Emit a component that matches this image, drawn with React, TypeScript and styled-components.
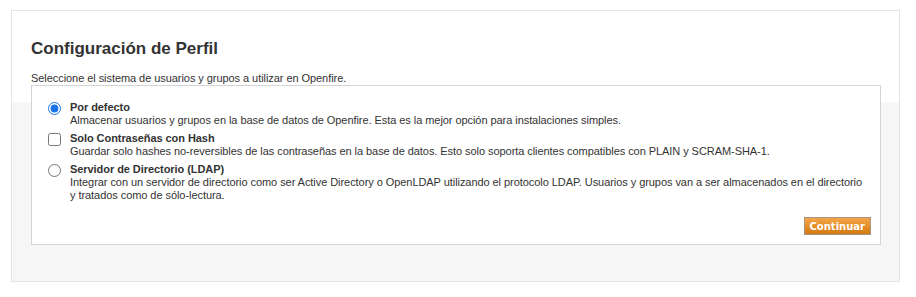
import { FC } from 'react';
import styled, { createGlobalStyle } from 'styled-components';

const GlobalStyle = createGlobalStyle`
  body {
    margin: 0;
    background-color: #ffffff;
    font-family: "Liberation Sans", Arial, sans-serif;
    color: #333333;
  }
`;

const Page = styled.div`
  padding: 10px 16px 16px 11px;
`;

const Panel = styled.div`
  border: 1px solid #e4e4e4;
  background: linear-gradient(to bottom, #ffffff 0px, #ffffff 91px, #f6f6f6 92px, #f6f6f6 100%);
  padding: 27px 18px 35px 19px;
  height: 272px;
  box-sizing: border-box;
`;

const Title = styled.h1`
  margin: 0 0 13px 0;
  font-size: 17px;
  line-height: 21px;
  font-weight: bold;
  color: #333333;
`;

const Intro = styled.p`
  margin: 0;
  font-size: 11px;
  line-height: 13px;
  letter-spacing: -0.06px;
`;

const OptionsBox = styled.div`
  border: 1px solid #d4d4d4;
  background-color: #ffffff;
  padding: 15px 9px 9px 16px;
  display: flex;
  flex-direction: column;
`;

const OptionList = styled.div`
  display: flex;
  flex-direction: column;
  gap: 5px;
  padding-right: 5px;
`;

const OptionRow = styled.label`
  display: grid;
  grid-template-columns: 22px 1fr;
  font-size: 11px;
  line-height: 13px;
  letter-spacing: -0.06px;
`;

const Control = styled.input`
  margin: 1px 0 0 0;
  width: 13px;
  height: 13px;
  accent-color: #1a73e8;
`;

const OptionName = styled.div`
  font-weight: bold;
`;

const OptionText = styled.div``;

const Actions = styled.div`
  display: flex;
  justify-content: flex-end;
  margin-top: 15px;
`;

const Button = styled.button`
  font-family: "DejaVu Sans", Verdana, sans-serif;
  font-size: 10px;
  font-weight: bold;
  color: #ffffff;
  height: 18px;
  padding: 0 5px;
  border: 1px solid #a8957f;
  background: linear-gradient(to bottom, #f3a54a 0%, #e48d26 55%, #d27a16 100%);
  cursor: pointer;
`;

type Option = {
  id: string;
  kind: 'radio' | 'checkbox';
  name: string;
  text: string;
  checked?: boolean;
};

const options: Option[] = [
  {
    id: 'default',
    kind: 'radio',
    name: 'Por defecto',
    text: 'Almacenar usuarios y grupos en la base de datos de Openfire. Esta es la mejor opción para instalaciones simples.',
    checked: true,
  },
  {
    id: 'hashed',
    kind: 'checkbox',
    name: 'Solo Contraseñas con Hash',
    text: 'Guardar solo hashes no-reversibles de las contraseñas en la base de datos. Esto solo soporta clientes compatibles con PLAIN y SCRAM-SHA-1.',
  },
  {
    id: 'ldap',
    kind: 'radio',
    name: 'Servidor de Directorio (LDAP)',
    text: 'Integrar con un servidor de directorio como ser Active Directory o OpenLDAP utilizando el protocolo LDAP. Usuarios y grupos van a ser almacenados en el directorio y tratados como de sólo-lectura.',
  },
];

const App: FC = () => {
  return (
    <>
      <GlobalStyle />
      <Page>
        <Panel>
          <Title>Configuración de Perfil</Title>
          <Intro>Seleccione el sistema de usuarios y grupos a utilizar en Openfire.</Intro>
          <OptionsBox>
            <OptionList>
              {options.map(o =>
                <OptionRow key={o.id}>
                  <Control
                    type={o.kind}
                    name={o.kind === 'radio' ? 'mode' : o.id}
                    defaultChecked={o.checked}
                  />
                  <div>
                    <OptionName>{o.name}</OptionName>
                    <OptionText>{o.text}</OptionText>
                  </div>
                </OptionRow>
              )}
            </OptionList>
            <Actions>
              <Button type="button">Continuar</Button>
            </Actions>
          </OptionsBox>
        </Panel>
      </Page>
    </>
  );
};

export default App;
